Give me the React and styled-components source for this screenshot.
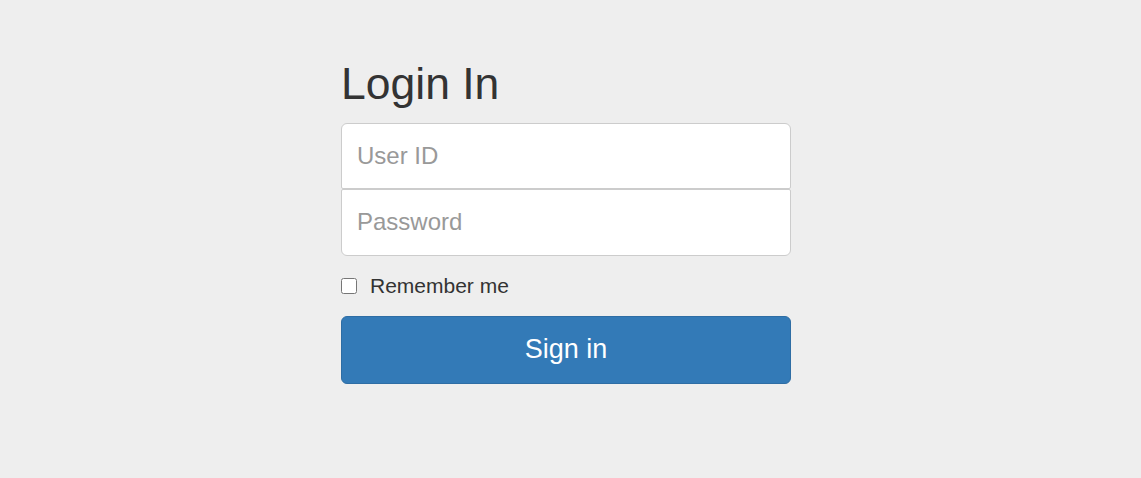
import React from "react";
import styled, { createGlobalStyle } from "styled-components";

const GlobalStyle = createGlobalStyle`
  html, body {
    margin: 0;
    padding: 0;
    background: #eee;
    font-family: "Liberation Sans", Arial, sans-serif;
    color: #333;
  }
`;

const Page = styled.div`
  display: flex;
  justify-content: center;
  padding: 60px 9px 0 0;
  min-height: 478px;
  box-sizing: border-box;
`;

const Form = styled.form`
  width: 450px;
  display: flex;
  flex-direction: column;
`;

const Heading = styled.h2`
  margin: 0 0 14px;
  font-size: 44.5px;
  font-weight: 500;
  line-height: 1.1;
  color: #333;
`;

const Input = styled.input`
  box-sizing: border-box;
  width: 100%;
  height: ${(p) => (p.$first ? "66px" : "67px")};
  padding: 0 15px;
  font-family: inherit;
  font-size: 24px;
  color: #555;
  background: #fff;
  border: 1px solid #ccc;
  border-radius: ${(p) => (p.$first ? "6px 6px 2px 2px" : "2px 2px 6px 6px")};
  margin: 0;
  outline: none;

  &::placeholder {
    color: #999;
  }
`;

const CheckRow = styled.label`
  display: flex;
  align-items: center;
  gap: 13px;
  margin: 18px 0;
  height: 24px;
  font-size: 21px;
  color: #333;
  cursor: pointer;
`;

const Checkbox = styled.input`
  width: 16px;
  height: 16px;
  margin: 0;
`;

const Button = styled.button`
  box-sizing: border-box;
  width: 100%;
  height: 68px;
  font-family: inherit;
  font-size: 27px;
  color: #fff;
  background: #337ab7;
  border: 1px solid #2e6da4;
  border-radius: 6px;
  cursor: pointer;
`;

export default function App() {
  return (
    <>
      <GlobalStyle />
      <Page>
        <Form onSubmit={(e) => e.preventDefault()}>
          <Heading>Login In</Heading>
          <Input $first type="text" placeholder="User ID" />
          <Input type="password" placeholder="Password" />
          <CheckRow>
            <Checkbox type="checkbox" />
            Remember me
          </CheckRow>
          <Button type="submit">Sign in</Button>
        </Form>
      </Page>
    </>
  );
}
